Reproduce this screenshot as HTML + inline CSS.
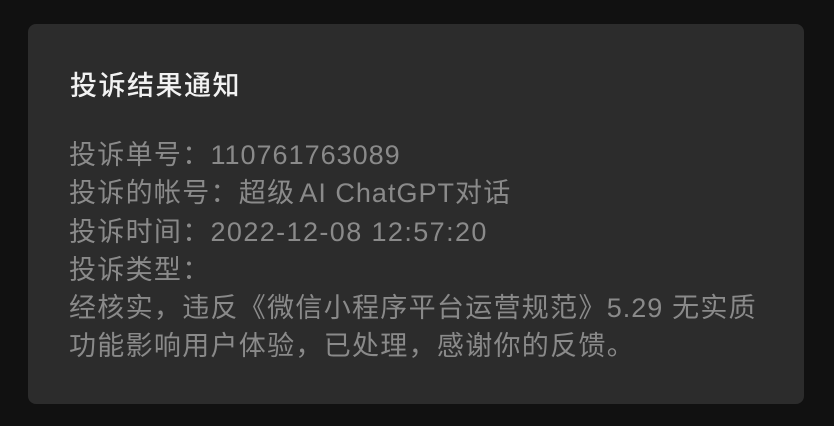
<!DOCTYPE html>
<html><head><meta charset="utf-8"><style>
html,body{margin:0;padding:0;width:834px;height:426px;background:#111;overflow:hidden}
.card{position:absolute;left:28px;top:24px;width:776px;height:380px;background:#2c2c2c;border-radius:8px}
.t{position:absolute;left:42px;top:45px;font:500 27px/34px "Liberation Sans","Noto Sans CJK SC",sans-serif;color:#f2f2f2;letter-spacing:1.5px}
.b{position:absolute;left:41px;top:112px;width:760px;font:27px/38.3px "Liberation Sans","Noto Sans CJK SC",sans-serif;color:#8a8a8a;letter-spacing:1.3px;white-space:nowrap}
.n{letter-spacing:1px}
.d{letter-spacing:1.4px}
.s{display:inline-block;width:4px}
</style></head><body>
<div class="card">
<div class="t">投诉结果通知</div>
<div class="b">投诉单号：<span class="n">110761763089</span><br>投诉的帐号：超级<span class="s"></span><span class="n">AI ChatGPT</span>对话<br>投诉时间：<span class="d">2022-12-08 12:57:20</span><br>投诉类型：<br>经核实，违反《微信小程序平台运营规范》<span class="n">5.29</span> 无实质<br>功能影响用户体验，已处理，感谢你的反馈。</div>
</div>
</body></html>
